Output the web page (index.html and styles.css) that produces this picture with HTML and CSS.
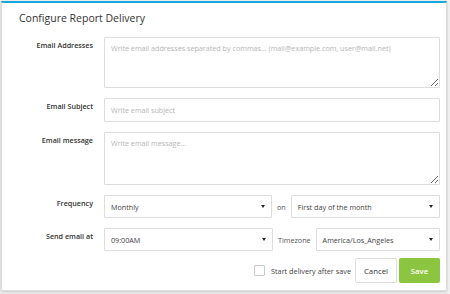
FILE: index.html
```html
<!DOCTYPE html>
<html lang="en">
<head>
  <meta charset="UTF-8" />
  <title>Configure Report Delivery</title>
  <link rel="stylesheet" href="styles.css">
</head>
<body>

  <div class="modal">
    <h2 class="modal-title">Configure Report Delivery</h2>

    <div class="form">
      <div class="row">
        <label class="label">Email Addresses</label>
        <textarea class="field area-lg" placeholder="Write email addresses separated by commas... (mail@example.com, user@mail.net)"></textarea>
      </div>

      <div class="row">
        <label class="label">Email Subject</label>
        <input class="field input" type="text" placeholder="Write email subject">
      </div>

      <div class="row">
        <label class="label">Email message</label>
        <textarea class="field area-md" placeholder="Write email message..."></textarea>
      </div>

      <div class="row">
        <label class="label">Frequency</label>
        <div class="inline">
          <div class="select sel-freq"><span>Monthly</span><span class="caret"></span></div>
          <span class="word">on</span>
          <div class="select grow"><span>First day of the month</span><span class="caret"></span></div>
        </div>
      </div>

      <div class="row last">
        <label class="label">Send email at</label>
        <div class="inline">
          <div class="select sel-time"><span>09:00AM</span><span class="caret"></span></div>
          <span class="word">Timezone</span>
          <div class="select grow"><span>America/Los_Angeles</span><span class="caret"></span></div>
        </div>
      </div>
    </div>

    <div class="footer">
      <label class="check"><span class="box"></span>Start delivery after save</label>
      <button class="btn btn-cancel">Cancel</button>
      <button class="btn btn-save">Save</button>
    </div>
  </div>

</body>
</html>
```

FILE: styles.css
```css
* {
  box-sizing: border-box;
}

body {
  margin: 0;
  height: 294px;
  background: #f3f3f3;
  font-family: "Open Sans", Arial, sans-serif;
  color: #333;
  overflow: hidden;
}

.modal {
  width: 446px;
  height: 290px;
  margin: 1px 0 0 1px;
  background: white;
  border: 1px solid #ddd;
  border-top: 2px solid #1aa7e0;
  box-shadow: 0 1px 3px rgba(0, 0, 0, 0.2);
}

.modal-title {
  margin: 0;
  padding: 8px 0 0 17px;
  height: 34px;
  font-size: 10.5px;
  line-height: 14px;
  font-weight: normal;
  color: #333;
}

.form {
  padding-right: 6px;
}

.row {
  display: flex;
  margin-bottom: 10px;
}

.row.last {
  margin-bottom: 7px;
}

.label {
  width: 91px;
  flex: none;
  margin-right: 11px;
  padding-top: 3px;
  text-align: right;
  font-size: 7.2px;
  font-weight: 600;
  color: #333;
}

.field {
  flex: 1;
  display: block;
  border: 1px solid #ddd;
  border-radius: 1px;
  font-family: "Open Sans", Arial, sans-serif;
  font-size: 7.2px;
  color: #555;
  padding: 5px 6px;
  outline: none;
  margin: 0;
}

.field::placeholder {
  color: #b5b5b5;
}

.area-lg {
  height: 51px;
  resize: vertical;
}

.area-md {
  height: 53px;
  resize: vertical;
}

.input {
  height: 24px;
}

.inline {
  flex: 1;
  display: flex;
  align-items: center;
}

.select {
  height: 23px;
  display: flex;
  align-items: center;
  justify-content: space-between;
  padding: 0 6px;
  border: 1px solid #ddd;
  border-radius: 1px;
  font-size: 7.2px;
  color: #444;
}

.sel-freq {
  width: 168px;
}

.sel-time {
  width: 169px;
}

.grow {
  flex: 1;
}

.caret {
  width: 0;
  height: 0;
  border-left: 2.5px solid transparent;
  border-right: 2.5px solid transparent;
  border-top: 3px solid #222;
}

.word {
  padding: 0 5px;
  font-size: 7.2px;
  color: #555;
}

.footer {
  display: flex;
  justify-content: flex-end;
  align-items: center;
  padding-right: 6px;
}

.check {
  display: flex;
  align-items: center;
  font-size: 7.3px;
  color: #444;
  margin-right: 4px;
}

.box {
  width: 11px;
  height: 11px;
  border: 1px solid #ccc;
  border-radius: 1px;
  margin-right: 6px;
}

.btn {
  height: 25px;
  border-radius: 2px;
  font-family: "Open Sans", Arial, sans-serif;
  font-size: 7.8px;
  cursor: pointer;
}

.btn-cancel {
  width: 42px;
  background: white;
  border: 1px solid #ddd;
  color: #333;
  margin-right: 2px;
}

.btn-save {
  width: 41px;
  background: #8cc540;
  border: none;
  color: white;
  font-weight: 600;
}
```
